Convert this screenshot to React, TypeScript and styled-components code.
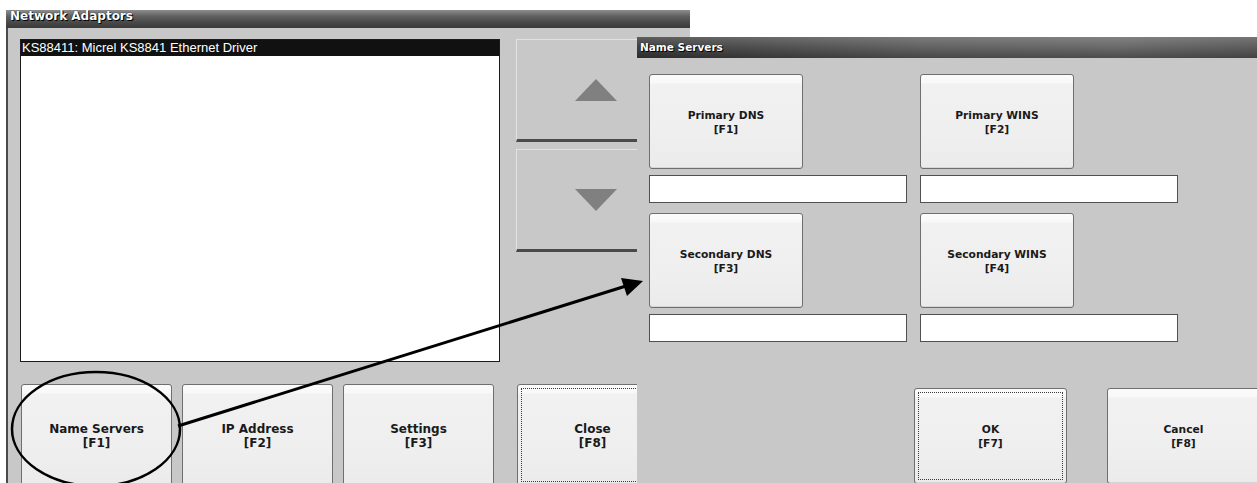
import styled, { createGlobalStyle } from "styled-components";

const GlobalStyle = createGlobalStyle`
  html, body {
    margin: 0;
    padding: 0;
    background: #ffffff;
  }
  body {
    font-family: "DejaVu Sans", "Liberation Sans", sans-serif;
  }
  * {
    box-sizing: border-box;
  }
`;

type Pos = { $left: number; $top: number; $width: number; $height: number };

export default function App() {
  return (
    <>
      <GlobalStyle />
      <Desktop>
        {/* Network Adaptors */}
        <Window $left={6} $top={10} $width={684} $height={490}>
          <TitleBar $height={18} $size={12} $lineHeight={12}>
            Network Adaptors
          </TitleBar>
          <AdaptorsBody>
            <TopRow>
              <ListBox>
                <ListItem $selected>KS88411: Micrel KS8841 Ethernet Driver</ListItem>
              </ListBox>
              <SideColumn>
                <ScrollButton>
                  <svg width="42" height="22" viewBox="0 0 42 22">
                    <polygon points="21,0 42,22 0,22" fill="#808080" />
                  </svg>
                </ScrollButton>
                <ScrollButton>
                  <svg width="42" height="22" viewBox="0 0 42 22">
                    <polygon points="0,0 42,0 21,22" fill="#808080" />
                  </svg>
                </ScrollButton>
              </SideColumn>
            </TopRow>
            <ButtonRow>
              <KeyButton $width={151} $height={102} $size={12}>
                Name Servers<br />[F1]
              </KeyButton>
              <KeyButton $width={151} $height={102} $size={12}>
                IP Address<br />[F2]
              </KeyButton>
              <KeyButton $width={151} $height={102} $size={12}>
                Settings<br />[F3]
              </KeyButton>
              <CloseSlot>
                <KeyButton $width={151} $height={102} $size={12} $focused>
                  Close<br />[F8]
                </KeyButton>
              </CloseSlot>
            </ButtonRow>
          </AdaptorsBody>
        </Window>

        {/* Name Servers */}
        <Window $left={637} $top={37} $width={640} $height={460}>
          <TitleBar $height={21} $size={10.5} $lineHeight={21} $dark>
            Name Servers
          </TitleBar>
          <ServersBody>
            <FieldGrid>
              <FieldGroup>
                <KeyButton $width={154} $height={95} $size={10.7}>
                  Primary DNS<br />[F1]
                </KeyButton>
                <TextField />
              </FieldGroup>
              <FieldGroup>
                <KeyButton $width={154} $height={95} $size={10.7}>
                  Primary WINS<br />[F2]
                </KeyButton>
                <TextField />
              </FieldGroup>
              <FieldGroup>
                <KeyButton $width={154} $height={95} $size={10.7}>
                  Secondary DNS<br />[F3]
                </KeyButton>
                <TextField />
              </FieldGroup>
              <FieldGroup>
                <KeyButton $width={154} $height={95} $size={10.7}>
                  Secondary WINS<br />[F4]
                </KeyButton>
                <TextField />
              </FieldGroup>
            </FieldGrid>
            <DialogFooter>
              <KeyButton $width={153} $height={96} $size={10.7} $focused>
                OK<br />[F7]
              </KeyButton>
              <KeyButton $width={153} $height={96} $size={10.7}>
                Cancel<br />[F8]
              </KeyButton>
            </DialogFooter>
          </ServersBody>
        </Window>

        {/* callout drawn over the screenshots */}
        <Annotation width="1257" height="483" viewBox="0 0 1257 483">
          <ellipse cx="96" cy="429" rx="84" ry="57" fill="none" stroke="#000" strokeWidth="2.5" />
          <line x1="178" y1="426" x2="626" y2="286" stroke="#000" strokeWidth="3" />
          <polygon points="643,281 621,278 627,296" fill="#000" />
        </Annotation>
      </Desktop>
    </>
  );
}

// STYLES

const Desktop = styled.div`
  position: relative;
  width: 1257px;
  height: 483px;
  overflow: hidden;
  background: #ffffff;
`;

const Window = styled.section<Pos>`
  position: absolute;
  left: ${(p) => p.$left}px;
  top: ${(p) => p.$top}px;
  width: ${(p) => p.$width}px;
  height: ${(p) => p.$height}px;
  display: flex;
  flex-direction: column;
  background: #c8c8c8;
`;

const TitleBar = styled.header<{
  $height: number;
  $size: number;
  $lineHeight: number;
  $dark?: boolean;
}>`
  flex: none;
  height: ${(p) => p.$height}px;
  padding-left: ${(p) => (p.$dark ? 3 : 4)}px;
  overflow: hidden;
  color: #ffffff;
  font-family: "DejaVu Sans", sans-serif;
  font-weight: bold;
  font-size: ${(p) => p.$size}px;
  line-height: ${(p) => p.$lineHeight}px;
  text-shadow: 1px 1px 0 #000, 0 0 1px #000;
  background: ${(p) =>
    p.$dark
      ? "linear-gradient(to bottom, rgba(255,255,255,0.18), rgba(255,255,255,0.04) 45%, rgba(0,0,0,0.25)), linear-gradient(to right, #3a3a3a, #5e5e5e 45%, #666666 75%, #555555)"
      : "linear-gradient(to bottom, #8e8e8e 0%, #606060 35%, #484848 70%, #3a3a3a 100%)"};
`;

const AdaptorsBody = styled.div`
  flex: 1;
  display: flex;
  flex-direction: column;
  border-left: 2px solid #4a4a4a;
  padding: 11px 14px 0 12px;
`;

const TopRow = styled.div`
  display: flex;
  gap: 16px;
`;

const ListBox = styled.div`
  width: 480px;
  height: 323px;
  background: #ffffff;
  border: 1px solid #1a1a1a;
`;

const ListItem = styled.div<{ $selected?: boolean }>`
  height: 16px;
  padding-left: 1px;
  font-family: "Liberation Sans", Arial, sans-serif;
  font-size: 13px;
  line-height: 16px;
  color: ${(p) => (p.$selected ? "#ffffff" : "#000000")};
  background: ${(p) => (p.$selected ? "#111111" : "transparent")};
  white-space: nowrap;
`;

const SideColumn = styled.div`
  display: flex;
  flex-direction: column;
  gap: 7px;
`;

const ScrollButton = styled.div`
  width: 160px;
  height: 103px;
  display: flex;
  align-items: center;
  justify-content: center;
  background: #c8c8c8;
  border: 1px solid #e2e2e2;
  border-bottom: 3px solid #4a4a4a;
`;

const ButtonRow = styled.div`
  display: flex;
  gap: 10px;
  margin-top: 22px;
  padding-left: 1px;
`;

const CloseSlot = styled.div`
  margin-left: 13px;
`;

const KeyButton = styled.div<{
  $width: number;
  $height: number;
  $size: number;
  $focused?: boolean;
}>`
  flex: none;
  width: ${(p) => p.$width}px;
  height: ${(p) => p.$height}px;
  display: flex;
  align-items: center;
  justify-content: center;
  padding-top: 2px;
  text-align: center;
  font-family: "DejaVu Sans", sans-serif;
  font-weight: bold;
  font-size: ${(p) => p.$size}px;
  line-height: 14px;
  color: #1a1a1a;
  background: linear-gradient(
    to bottom,
    #fbfbfb 0px,
    #f8f8f8 8px,
    #f1f1f1 9px,
    #efefef 60%,
    #ebebeb 100%
  );
  border: 1px solid #6f6f6f;
  border-radius: 3px;
  box-shadow: inset 0 -1px 0 #d6d6d6;
  outline: ${(p) => (p.$focused ? "1px dotted #3a3a3a" : "none")};
  outline-offset: -5px;
`;

const ServersBody = styled.div`
  flex: 1;
  display: flex;
  flex-direction: column;
  padding: 16px 17px 0 12px;
`;

const FieldGrid = styled.div`
  display: grid;
  grid-template-columns: 258px 258px;
  column-gap: 13px;
  row-gap: 10px;
`;

const FieldGroup = styled.div`
  display: flex;
  flex-direction: column;
  gap: 6px;
`;

const TextField = styled.div`
  width: 258px;
  height: 28px;
  background: #ffffff;
  border: 1px solid #505050;
`;

const DialogFooter = styled.div`
  display: flex;
  justify-content: flex-end;
  gap: 40px;
  margin-top: 46px;
`;

const Annotation = styled.svg`
  position: absolute;
  left: 0;
  top: 0;
  pointer-events: none;
  z-index: 10;
`;
